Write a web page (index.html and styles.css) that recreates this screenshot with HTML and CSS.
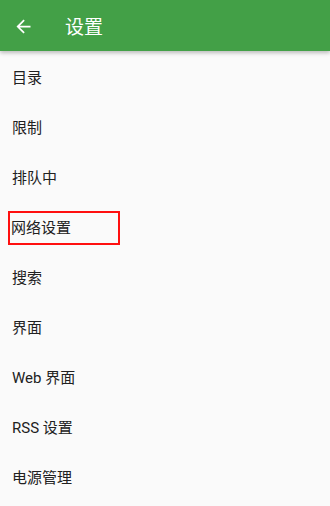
FILE: index.html
```html
<!DOCTYPE html>
<html lang="zh">
<head>
<meta charset="utf-8">
<link rel="stylesheet" href="styles.css">
</head>
<body>
<header class="bar">
  <svg class="back" width="21" height="21" viewBox="0 0 24 24"><path d="M20 11H7.83l5.59-5.59L12 4l-8 8 8 8 1.41-1.41L7.83 13H20v-2z" fill="#fff"/></svg>
  <span class="title">设置</span>
</header>
<ul class="list">
  <li class="item">目录</li>
  <li class="item">限制</li>
  <li class="item">排队中</li>
  <li class="item"><span class="mark">网络设置</span></li>
  <li class="item">搜索</li>
  <li class="item">界面</li>
  <li class="item">Web 界面</li>
  <li class="item">RSS 设置</li>
  <li class="item">电源管理</li>
</ul>
</body>
</html>
```
FILE: styles.css
```css
html, body { margin: 0; padding: 0; }
body {
  width: 330px;
  height: 506px;
  overflow: hidden;
  background: #fafafa;
  font-family: Roboto, "Noto Sans CJK SC", sans-serif;
}
.bar {
  height: 51px;
  background: #43a047;
  display: flex;
  align-items: center;
  padding-left: 13px;
  box-shadow: 0 2px 4px rgba(0,0,0,0.25);
  position: relative;
}
.back { display: block; margin-top: 1px; }
.title {
  color: #fff;
  font-size: 19px;
  margin-left: 31px;
}
.list {
  list-style: none;
  margin: 0;
  padding: 0;
}
.item {
  height: 50px;
  display: flex;
  align-items: center;
  padding-left: 12px;
  font-size: 15px;
  color: #212121;
}
.mark {
  display: inline-block;
  outline: 2px solid #ff1010;
  width: 107px;
  height: 30px;
  line-height: 30px;
  margin-left: -2px;
  padding-left: 1px;
  margin-top: 4px;
}
```
